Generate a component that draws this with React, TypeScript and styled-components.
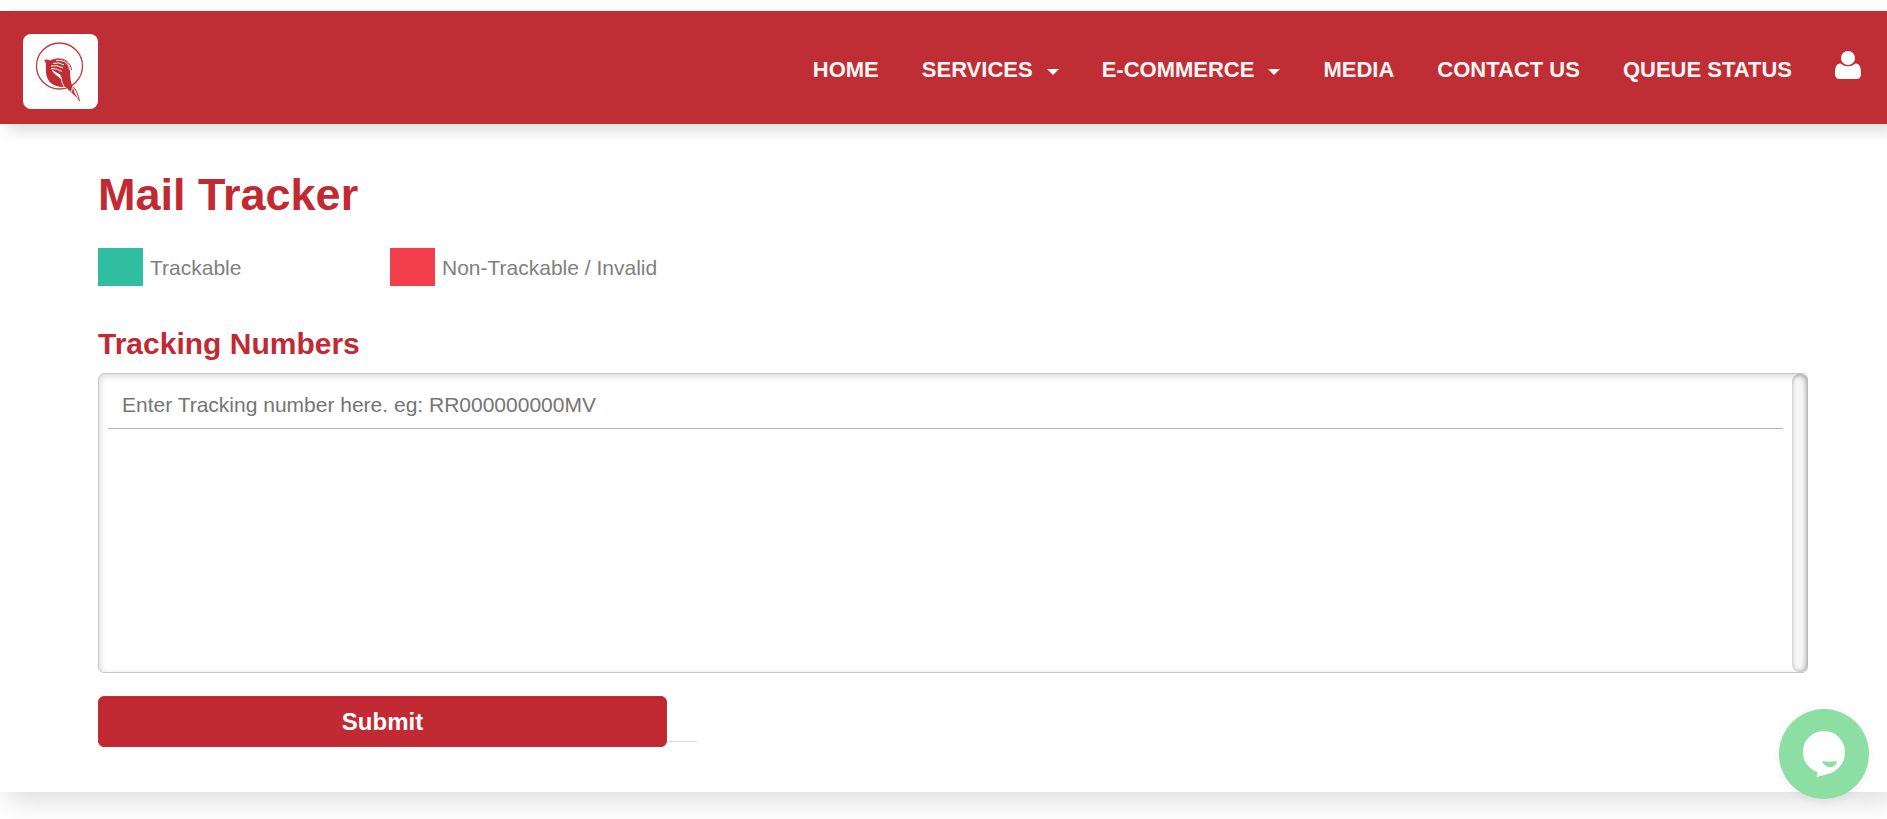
import React from "react";
import styled, { createGlobalStyle } from "styled-components";

const GlobalStyle = createGlobalStyle`
  *, *::before, *::after { box-sizing: border-box; }
  body {
    margin: 0;
    background: #fff;
    font-family: "Liberation Sans", Arial, sans-serif;
    overflow-x: hidden;
  }
  h1, h2, ul { margin: 0; padding: 0; }
`;

const Page = styled.div`
  padding-top: 11px;
  min-height: 100vh;
  overflow: hidden;
`;

const Header = styled.header`
  position: relative;
  z-index: 1;
  display: flex;
  align-items: center;
  justify-content: space-between;
  height: 113px;
  padding: 0 26px 0 23px;
  background: #bf2e34;
  box-shadow: 8px 6px 14px rgba(0, 0, 0, 0.15);
`;

const LogoLink = styled.a`
  display: flex;
  width: 75px;
  height: 75px;
  margin-top: 8px;
  border-radius: 8px;
  background: #fff;
`;

const Nav = styled.nav`
  display: flex;
  align-items: center;
  gap: 43px;
  margin-top: 4px;
`;

const NavLink = styled.a`
  display: flex;
  align-items: center;
  gap: 14px;
  color: #f5f5f5;
  font-size: 22px;
  line-height: 26px;
  font-weight: 700;
  text-decoration: none;
  white-space: nowrap;
`;

const Caret = styled.span`
  width: 12px;
  border: 6px solid transparent;
  border-top-color: #fff;
  border-bottom: 0;
  margin-top: 4px;
`;

const AccountLink = styled.a`
  display: flex;
  margin-bottom: 10px;
`;

const Main = styled.main`
  padding: 44px 79px 45px 98px;
  box-shadow: 8px 10px 24px rgba(0, 0, 0, 0.13);
`;

const Title = styled.h1`
  color: #c12a33;
  font-size: 45px;
  line-height: 54px;
`;

const Legend = styled.ul`
  display: flex;
  margin-top: 26px;
  list-style: none;
`;

const LegendItem = styled.li`
  display: flex;
  align-items: center;
  gap: 7px;
  width: 292px;
  color: #808080;
  font-size: 21px;
  line-height: 24px;
  white-space: nowrap;
`;

const LegendLabel = styled.span`
  padding-top: 2px;
`;

const Swatch = styled.span<{ $color: string }>`
  width: 45px;
  height: 38px;
  background: ${(p) => p.$color};
`;

const FieldTitle = styled.h2`
  margin-top: 40px;
  color: #c12a33;
  font-size: 30px;
  line-height: 36px;
`;

const TrackBox = styled.div`
  display: flex;
  height: 300px;
  margin-top: 11px;
  border: 1px solid #c8c8c8;
  border-radius: 6px;
  box-shadow: inset 1px 2px 6px rgba(0, 0, 0, 0.16);
`;

const TrackInput = styled.input`
  flex: 1;
  min-width: 0;
  height: 47px;
  margin: 8px 9px 0 9px;
  padding: 0 14px;
  border: 0;
  border-bottom: 1px solid #b4b4b4;
  outline: none;
  background: transparent;
  color: #444;
  font: 21px "Liberation Sans", Arial, sans-serif;
  &::placeholder { color: #757575; opacity: 1; }
`;

const ScrollRail = styled.div`
  width: 16px;
  margin-right: -1px;
  border-radius: 8px;
  background: #f7f7f7;
  box-shadow: inset -2px 1px 5px rgba(0, 0, 0, 0.3), inset 1px 0 4px rgba(0, 0, 0, 0.14);
`;

const Actions = styled.div`
  display: flex;
  margin-top: 23px;
`;

const SubmitButton = styled.button`
  width: 569px;
  height: 51px;
  border: 1px solid #cf2c2c;
  border-radius: 6px;
  background: #c12a33;
  color: #fff;
  font: 700 24px "Liberation Sans", Arial, sans-serif;
  box-shadow: inset 0 1px 3px rgba(0, 0, 0, 0.12);
`;

const Rule = styled.span`
  width: 30px;
  height: 46px;
  border-bottom: 1px solid #dcdcdc;
`;

const ChatButton = styled.button`
  position: fixed;
  right: 18px;
  bottom: 20px;
  z-index: 2;
  width: 90px;
  height: 90px;
  padding: 0;
  border: 0;
  border-radius: 50%;
  background: #8ddea2;
  box-shadow: 0 2px 10px rgba(0, 0, 0, 0.06);
`;

const links = [
  { label: "HOME" },
  { label: "SERVICES", menu: true },
  { label: "E-COMMERCE", menu: true },
  { label: "MEDIA" },
  { label: "CONTACT US" },
  { label: "QUEUE STATUS" },
];

const legend = [
  { label: "Trackable", color: "#30bea1" },
  { label: "Non-Trackable / Invalid", color: "#f23f4b" },
];

const BirdLogo = () => (
  <svg width="75" height="75" viewBox="0 0 75 75" fill="none" aria-hidden="true">
    <circle cx="36.5" cy="32" r="23" stroke="#c4383e" strokeWidth="1.3" />
    <path
      d="M21 26 Q24 25 27 26.500 C30 25 33 24.500 37 25 C43 26 47 30 47 36 C47 44 48 49 50 54 L56.500 67 C52 61 46 57 43 53 C31 54 24 48 23 39 C22.500 33 24 29 21 26Z"
      fill="#bf2e34"
    />
    <path d="M28 28 C34 22.500 47 24 48.500 36" stroke="#bf2e34" strokeWidth="1" />
    <path d="M28.500 35 C30 40 34 41 38.500 45.500 L37.500 41 C35 38.500 31 38 28.500 35Z" fill="#fff" />
    <path d="M38 43 C38.500 48 40 51 42 54" stroke="#fff" strokeWidth="1" />
    <path d="M28 34.500 Q34 34 39 37.500 M28 32 Q34 30.500 40 34 M30 29.500 Q36 27.500 41 31" stroke="#fff" strokeWidth="1" />
    <path d="M33 26.500 C42 25.500 46 30 46.500 36" stroke="#fff" strokeWidth="1" />
    <path d="M49.500 53 L48.500 58 M51 57 L55 64" stroke="#fff" strokeWidth="1" />
    <path d="M50.500 53 C54 57 55 61 56.500 67" stroke="#bf2e34" strokeWidth="1" />
  </svg>
);

const UserIcon = () => (
  <svg width="26" height="28" viewBox="0 0 26 28" fill="#fff" aria-hidden="true">
    <circle cx="13" cy="7" r="7" />
    <path d="M5.500 12.500 Q8.500 15.200 13 15.200 T20.500 12.500 C25 12.500 26 17 26 23 Q26 28 21.500 28 H4.500 Q0 28 0 23 C0 17 1 12.500 5.500 12.500Z" />
  </svg>
);

const ChatIcon = () => (
  <svg width="90" height="90" viewBox="0 0 90 90" aria-hidden="true">
    <path
      d="M45 22 A21 21 0 0 1 66 43 C66 54 59 61 52 64 Q46 66 37.500 68 L38.500 63 A21 21 0 0 1 45 22Z"
      fill="#fff"
    />
    <path d="M43 52 Q50 53.500 58 52 C57 60 46 60 43 52Z" fill="#8ddea2" />
  </svg>
);

export default function App() {
  return (
    <Page>
      <GlobalStyle />
      <Header>
        <LogoLink href="#" aria-label="Home">
          <BirdLogo />
        </LogoLink>
        <Nav>
          {links.map((l) => (
            <NavLink href="#" key={l.label}>
              {l.label}
              {l.menu && <Caret />}
            </NavLink>
          ))}
          <AccountLink href="#" aria-label="Account">
            <UserIcon />
          </AccountLink>
        </Nav>
      </Header>
      <Main>
        <Title>Mail Tracker</Title>
        <Legend>
          {legend.map((item) => (
            <LegendItem key={item.label}>
              <Swatch $color={item.color} />
              <LegendLabel>{item.label}</LegendLabel>
            </LegendItem>
          ))}
        </Legend>
        <FieldTitle>
          <label htmlFor="tracking">Tracking Numbers</label>
        </FieldTitle>
        <TrackBox>
          <TrackInput id="tracking" type="text" placeholder="Enter Tracking number here. eg: RR000000000MV" />
          <ScrollRail />
        </TrackBox>
        <Actions>
          <SubmitButton type="submit">Submit</SubmitButton>
          <Rule />
        </Actions>
      </Main>
      <ChatButton type="button" aria-label="Open chat">
        <ChatIcon />
      </ChatButton>
    </Page>
  );
}
